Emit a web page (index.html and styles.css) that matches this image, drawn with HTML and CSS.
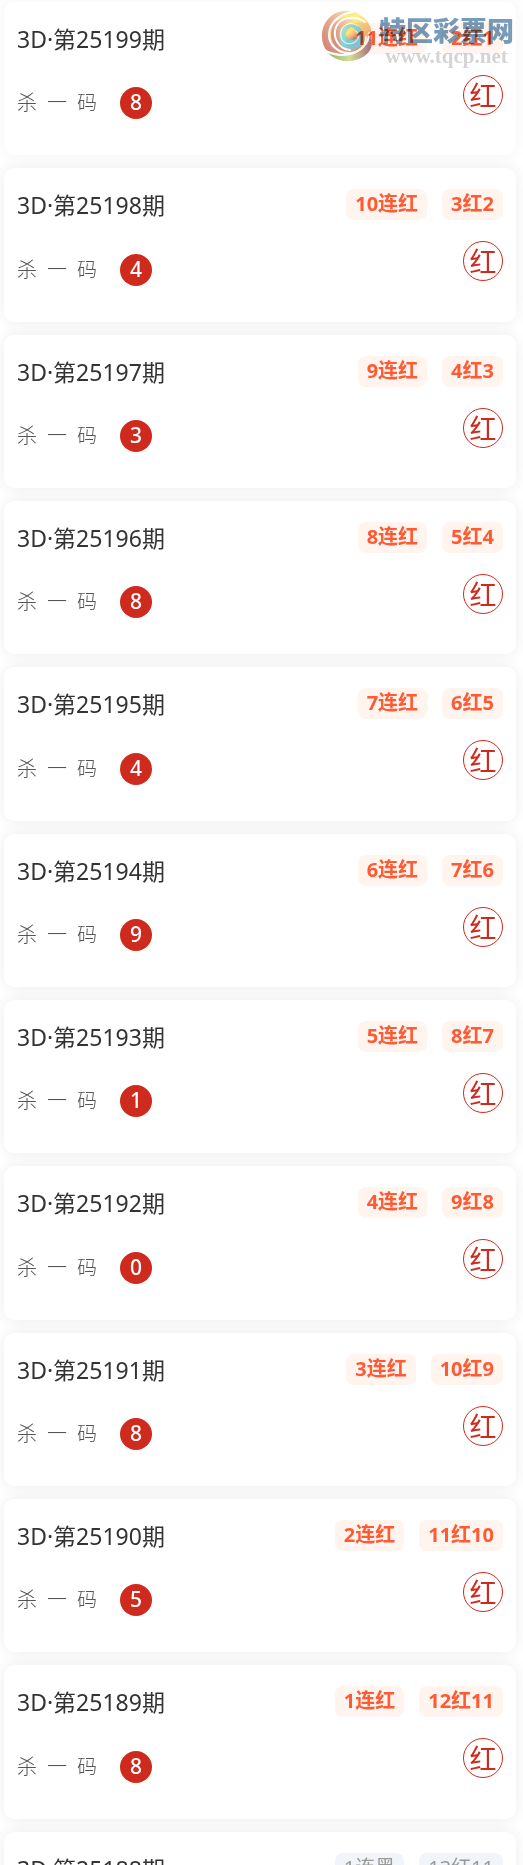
FILE: index.html
```html
<!DOCTYPE html>
<html lang="zh-CN">
<head>
<meta charset="utf-8">
<meta name="viewport" content="width=device-width, initial-scale=1">
<title>3D 杀一码</title>
<link rel="stylesheet" href="styles.css">
</head>
<body>
<main class="list" id="list"></main>
<div class="brand">
  <svg class="brand-mark" viewBox="0 0 50 52" aria-hidden="true">
    <defs>
      <linearGradient id="rose" x1="0" y1="1" x2="1" y2="0"><stop offset="0" stop-color="#c87870"/><stop offset=".5" stop-color="#e8a890"/><stop offset="1" stop-color="#fce4b8"/></linearGradient>
      <linearGradient id="gold" x1="0" y1="0" x2=".7" y2="1"><stop offset="0" stop-color="#fbd0a0"/><stop offset=".4" stop-color="#fdf080"/><stop offset=".75" stop-color="#f0b080"/><stop offset="1" stop-color="#b87070"/></linearGradient>
      <linearGradient id="cool" x1="0" y1="0" x2="1" y2="1"><stop offset="0" stop-color="#c4e8a8"/><stop offset=".5" stop-color="#80d4e0"/><stop offset="1" stop-color="#78c8e8"/></linearGradient>
      <linearGradient id="leaf" x1="0" y1="0" x2="1" y2="0"><stop offset="0" stop-color="#88b070"/><stop offset=".5" stop-color="#d4e098"/><stop offset="1" stop-color="#a87080"/></linearGradient>
    </defs>
    <circle cx="25" cy="26" r="25" fill="url(#gold)"/>
    <path fill="url(#rose)" d="M28 1C12-1 0 11 0 26c0 8 3 13 7 17 7 3 15 3 22 0C17 42 8 36 8 25 8 13 17 5 28 1z"/>
    <path fill="url(#rose)" d="M12 13c-5 9-4 19 3 25 5 4 12 5 18 3-8-3-13-9-13-16 0-8 5-13 13-13-7-5-16-4-21 1z"/>
    <path fill="url(#cool)" d="M19 18c-4 9-1 20 9 21 9 1 14-5 13-13-1-9-7-13-13-12-4 1-7 2-9 4z"/>
    <path fill="url(#gold)" d="M29 17c-6 2-7 9-2 12 4 2 9 0 9-5-1-4-4-6-7-7z"/>
    <path fill="url(#leaf)" d="M5 42c14 6 29 4 37-6 3-4 5-8 5-12 6 10 2 18-6 23-12 7-27 5-36-5z"/>
    <g fill="none" stroke="#fff" stroke-linecap="round">
      <path stroke-width="2" d="M31 2C17 4 7 13 7 25c0 10 9 18 20 18 10 0 17-7 17-16"/>
      <path stroke-width="2" d="M43 12C33 5 18 7 14 17c-4 11 3 22 14 23"/>
      <path stroke-width="1" d="M36 16c-7-5-15-2-17 5-2 9 5 15 12 12 6-2 7-8 3-12"/>
      <path stroke-width="2" d="M4 41c14 7 30 4 38-5 4-4 5-9 5-13"/>
    </g>
  </svg>
  <div class="brand-text">
    <span class="brand-name">特区彩票网</span>
    <span class="brand-url">www.tqcp.net</span>
  </div>
</div>
<script src="main.js"></script>
</body>
</html>
```
FILE: styles.css
```css
* {
  box-sizing: border-box;
}

body {
  margin: 0;
  background: #fff;
  color: #333;
  font-family: "Noto Sans", "Noto Sans CJK SC", sans-serif;
  overflow-x: hidden;
}

.list {
  display: flex;
  flex-direction: column;
  gap: 2.5vw;
  padding: 2px 7px 0 4px;
  height: 100vh;
  overflow: hidden;
}

.card {
  flex: none;
  display: flex;
  justify-content: space-between;
  padding: 21px 13px 36px;
  border-radius: 10px;
  background: #fff;
  box-shadow: 0 0 16px rgba(0, 0, 0, 0.05);
}

.card + .card {
  box-shadow: 0 0 16px rgba(0, 0, 0, 0.08);
}

.title {
  margin: 1px 0 32px;
  font-size: 23px;
  font-weight: 400;
  line-height: 1.36;
}

.pick {
  display: flex;
  align-items: center;
  gap: 23px;
}

.pick-label {
  width: 80px;
  color: #555;
  font-size: 20px;
  font-weight: 300;
  line-height: 32px;
  text-align-last: justify;
}

.ball {
  width: 32px;
  height: 32px;
  border-radius: 50%;
  background: #cf2a1e;
  color: #fff;
  font-size: 21px;
  font-weight: 500;
  line-height: 31px;
  text-align: center;
}

.result {
  display: flex;
  flex-direction: column;
  align-items: flex-end;
  gap: 21px;
}

.tags {
  display: flex;
  gap: 15px;
}

.tag {
  padding: 0 9px 2px;
  border-radius: 8px;
  background: #fff4ee;
  color: #ff5a33;
  font-size: 20px;
  font-weight: 700;
  line-height: 29px;
}

.tag-miss {
  background: #f1f5f9;
  color: #999;
  font-weight: 400;
}

.stamp {
  width: 40px;
  height: 40px;
  border: 1px solid #cf2a1e;
  border-radius: 50%;
  color: #cf2a1e;
  font-size: 27px;
  line-height: 39px;
  text-align: center;
}

.brand {
  position: absolute;
  top: 10px;
  right: 9px;
  display: flex;
  gap: 7px;
  mix-blend-mode: multiply;
}

.brand-mark {
  width: 50px;
  height: 52px;
}

.brand-text {
  display: flex;
  flex-direction: column;
  align-items: center;
  padding-top: 6px;
}

.brand-name {
  color: #779cbb;
  font-size: 27px;
  font-weight: 900;
  line-height: 30px;
}

.brand-url {
  color: #d4d4d4;
  font-family: "Liberation Serif", serif;
  font-size: 21px;
  font-weight: 700;
  line-height: 20px;
}
```
FILE: main.js
```js
const picks = [8, 4, 3, 8, 4, 9, 1, 0, 8, 5, 8, 8];
const list = document.getElementById("list");

picks.forEach((pick, i) => {
  const miss = i === 11;
  const streak = miss ? "1连黑" : `${11 - i}连红`;
  const record = miss ? "13红11" : `${i + 2}红${i + 1}`;
  const tag = miss ? "tag tag-miss" : "tag";
  list.insertAdjacentHTML("beforeend", `
    <article class="card">
      <div class="info">
        <h2 class="title">3D·第${25199 - i}期</h2>
        <div class="pick"><span class="pick-label">杀 一 码</span><span class="ball">${pick}</span></div>
      </div>
      <div class="result">
        <div class="tags"><span class="${tag}">${streak}</span><span class="${tag}">${record}</span></div>
        <span class="stamp">${miss ? "黑" : "红"}</span>
      </div>
    </article>`);
});
```
